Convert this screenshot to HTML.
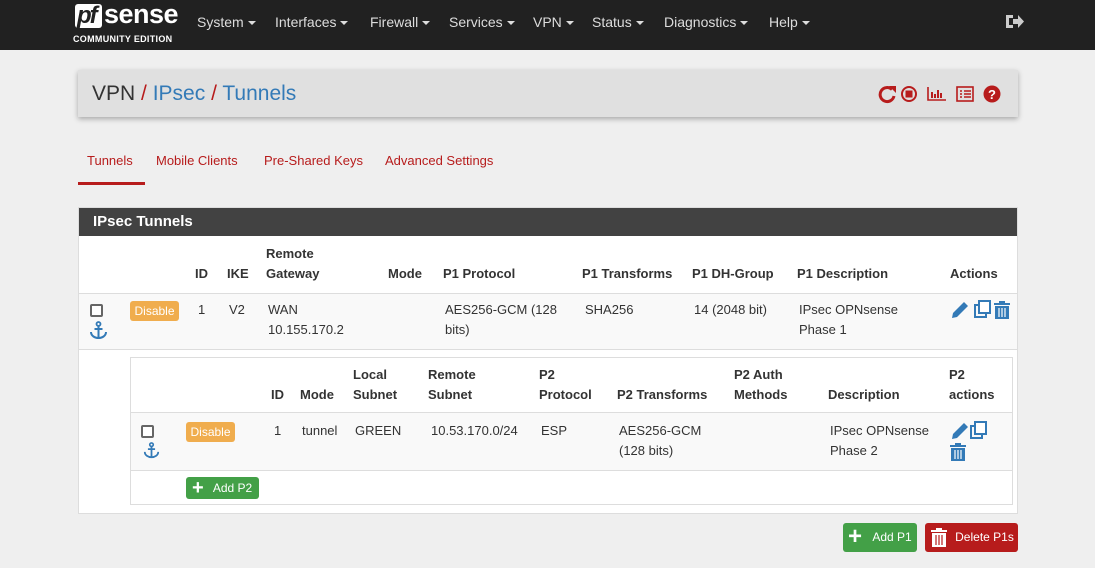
<!DOCTYPE html>
<html><head><meta charset="utf-8"><style>
*{box-sizing:border-box;margin:0;padding:0}
body{width:1095px;height:568px;overflow:hidden;background:#efefef;font-family:"Liberation Sans",sans-serif;font-size:13px;color:#333;position:relative}
.a{position:absolute;white-space:nowrap}
.nav{position:absolute;left:0;top:0;width:1095px;height:50px;background:#212121}
.nav .m{color:#ddd;font-size:14px;top:14px}
.car{display:inline-block;border-left:4px solid transparent;border-right:4px solid transparent;border-top:4px solid #ddd;vertical-align:middle;margin-left:4px}
.bc{position:absolute;left:78px;top:70px;width:940px;height:47px;background:#e0e0e0;box-shadow:0 2px 5px rgba(0,0,0,.3)}
.tab{color:#b71c1c;font-size:13px;top:153px}
.panel{position:absolute;left:78px;top:207px;width:940px;height:307px;background:#fff;border:1px solid #ddd}
.ph{position:absolute;left:0;top:0;width:938px;height:28px;background:#424242;color:#fff;font-weight:bold;font-size:15px;padding:5px 14px}
.th{font-weight:bold;color:#333}
.btn{position:absolute;background:#f0ad4e;color:#fff;border-radius:3px;font-size:12px;text-align:center}
.g{background:#43a047}.r{background:#b71c1c}
.cb{position:absolute;width:13px;height:13px;border:2px solid #666;border-radius:2px;background:#fff}
.blue{color:#337ab7}
</style></head><body>
<div class="nav">
 <div class="a" style="left:75px;top:4px;width:103px;height:25px">
  <div class="a" style="left:0;top:0;width:27px;height:24px;background:#fff;border-radius:3px"></div>
  <div class="a" style="left:2px;top:-2px;color:#212121;font-weight:bold;font-style:italic;font-size:24px;letter-spacing:-2px">pf</div>
  <div class="a" style="left:29px;top:-5px;color:#fff;font-weight:bold;font-size:27px;letter-spacing:-0.5px">sense</div>
 </div>
 <div class="a" style="left:73px;top:34px;color:#fff;font-weight:bold;font-size:9px;letter-spacing:0.3px">COMMUNITY EDITION</div>
 <div class="a m" style="left:197px">System<span class="car"></span></div>
 <div class="a m" style="left:275px">Interfaces<span class="car"></span></div>
 <div class="a m" style="left:370px">Firewall<span class="car"></span></div>
 <div class="a m" style="left:449px">Services<span class="car"></span></div>
 <div class="a m" style="left:533px">VPN<span class="car"></span></div>
 <div class="a m" style="left:592px">Status<span class="car"></span></div>
 <div class="a m" style="left:664px">Diagnostics<span class="car"></span></div>
 <div class="a m" style="left:769px">Help<span class="car"></span></div>
 <svg class="a" style="left:1005px;top:13px" width="20" height="17" viewBox="0 0 20 17"><path d="M1 2h7v3H4v7h4v3H1z" fill="#ccc"/><path d="M8 6h5V2l6 6.5-6 6.5v-4H8z" fill="#ccc"/></svg>
</div>
<div class="bc">
 <div class="a" style="left:14px;top:12px;font-size:21px;color:#333">VPN<span style="color:#b71c1c"> / </span> <span class="blue">IPsec</span><span style="color:#b71c1c"> / </span> <span class="blue">Tunnels</span></div>
 <svg class="a" style="left:800px;top:13px" width="128" height="22" viewBox="0 0 128 22">
  <path d="M14 6.5A7 7 0 1 0 16 13" fill="none" stroke="#b71c1c" stroke-width="3"/><path d="M11 3h7v7z" fill="#b71c1c"/>
  <circle cx="31" cy="11" r="7" fill="none" stroke="#b71c1c" stroke-width="2"/><rect x="27.5" y="7.5" width="7" height="7" fill="#b71c1c"/>
  <path d="M50 4v13h18" fill="none" stroke="#b71c1c" stroke-width="1.6"/><path d="M54 9v6M57 11v4M60 7v8M63 10v5" stroke="#b71c1c" stroke-width="2"/>
  <rect x="79" y="4" width="16" height="14" fill="none" stroke="#b71c1c" stroke-width="1.6"/><path d="M82 8h2M86 8h7M82 11h2M86 11h7M82 14h2M86 14h7" stroke="#b71c1c" stroke-width="1.6"/>
  <circle cx="114" cy="11" r="8.5" fill="#b71c1c"/><text x="114" y="16" font-size="13" font-weight="bold" fill="#fff" text-anchor="middle" font-family="Liberation Sans">?</text>
 </svg>
</div>
<div class="a tab" style="left:87px">Tunnels</div>
<div class="a" style="left:78px;top:182px;width:67px;height:3px;background:#b71c1c"></div>
<div class="a tab" style="left:156px">Mobile Clients</div>
<div class="a tab" style="left:264px">Pre-Shared Keys</div>
<div class="a tab" style="left:385px">Advanced Settings</div>

<div class="panel">
 <div class="ph">IPsec Tunnels</div>
</div>
<div class="a" style="left:79px;top:293px;width:938px;height:1px;background:#ddd"></div>
<div class="a" style="left:79px;top:294px;width:938px;height:55px;background:#f9f9f9"></div>
<div class="a" style="left:79px;top:349px;width:938px;height:1px;background:#ddd"></div>
<div class="a th" style="left:195px;top:266px">ID</div>
<div class="a th" style="left:227px;top:266px">IKE</div>
<div class="a th" style="left:266px;top:244px;line-height:20px">Remote<br>Gateway</div>
<div class="a th" style="left:388px;top:266px">Mode</div>
<div class="a th" style="left:443px;top:266px">P1 Protocol</div>
<div class="a th" style="left:582px;top:266px">P1 Transforms</div>
<div class="a th" style="left:692px;top:266px">P1 DH-Group</div>
<div class="a th" style="left:797px;top:266px">P1 Description</div>
<div class="a th" style="left:950px;top:266px">Actions</div>

<div class="cb" style="left:90px;top:304px"></div>
<svg class="a" style="left:89px;top:321px" width="19" height="19" viewBox="0 0 19 19"><circle cx="9.5" cy="3" r="2" fill="none" stroke="#337ab7" stroke-width="1.8"/><path d="M9.5 5v12M5.5 8h8M2 11c0 4 4 6 7.5 6s7.5-2 7.5-6" fill="none" stroke="#337ab7" stroke-width="2"/></svg>
<div class="btn" style="left:130px;top:301px;width:49px;height:20px;line-height:20px">Disable</div>
<div class="a" style="left:198px;top:302px">1</div>
<div class="a" style="left:229px;top:302px">V2</div>
<div class="a" style="left:268px;top:300px;line-height:20px">WAN<br>10.155.170.2</div>
<div class="a" style="left:445px;top:300px;line-height:20px">AES256-GCM (128<br>bits)</div>
<div class="a" style="left:585px;top:302px">SHA256</div>
<div class="a" style="left:694px;top:302px">14 (2048 bit)</div>
<div class="a" style="left:799px;top:300px;line-height:20px">IPsec OPNsense<br>Phase 1</div>
<svg class="a" style="left:950px;top:300px" width="62" height="20" viewBox="0 0 62 20">
 <path d="M2 18l1-5L14 2l4 4L7 17z" fill="#337ab7"/>
 <rect x="25" y="5" width="11" height="12" fill="none" stroke="#337ab7" stroke-width="2"/><rect x="29" y="1" width="11" height="12" fill="#fff" stroke="#337ab7" stroke-width="2"/>
 <path d="M44 3h16v2H44zM49 1h6v2h-6zM45 6h14v13H45z" fill="#337ab7"/><path d="M49 8v9M52 8v9M55 8v9" stroke="#fff" stroke-width="1.2"/>
</svg>

<div class="a" style="left:130px;top:357px;width:883px;height:148px;background:#fff;border:1px solid #ddd"></div>
<div class="a" style="left:131px;top:412px;width:881px;height:1px;background:#ddd"></div>
<div class="a" style="left:131px;top:413px;width:881px;height:57px;background:#f9f9f9"></div>
<div class="a" style="left:131px;top:470px;width:881px;height:1px;background:#ddd"></div>
<div class="a th" style="left:271px;top:387px">ID</div>
<div class="a th" style="left:300px;top:387px">Mode</div>
<div class="a th" style="left:353px;top:365px;line-height:20px">Local<br>Subnet</div>
<div class="a th" style="left:428px;top:365px;line-height:20px">Remote<br>Subnet</div>
<div class="a th" style="left:539px;top:365px;line-height:20px">P2<br>Protocol</div>
<div class="a th" style="left:617px;top:387px">P2 Transforms</div>
<div class="a th" style="left:734px;top:365px;line-height:20px">P2 Auth<br>Methods</div>
<div class="a th" style="left:828px;top:387px">Description</div>
<div class="a th" style="left:949px;top:365px;line-height:20px">P2<br>actions</div>

<div class="cb" style="left:141px;top:425px"></div>
<svg class="a" style="left:143px;top:442px" width="17" height="17" viewBox="0 0 19 19"><circle cx="9.5" cy="3" r="2" fill="none" stroke="#337ab7" stroke-width="1.8"/><path d="M9.5 5v12M5.5 8h8M2 11c0 4 4 6 7.5 6s7.5-2 7.5-6" fill="none" stroke="#337ab7" stroke-width="2"/></svg>
<div class="btn" style="left:186px;top:422px;width:49px;height:20px;line-height:20px">Disable</div>
<div class="a" style="left:274px;top:423px">1</div>
<div class="a" style="left:302px;top:423px">tunnel</div>
<div class="a" style="left:355px;top:423px">GREEN</div>
<div class="a" style="left:431px;top:423px">10.53.170.0/24</div>
<div class="a" style="left:541px;top:423px">ESP</div>
<div class="a" style="left:619px;top:421px;line-height:20px">AES256-GCM<br>(128 bits)</div>
<div class="a" style="left:830px;top:421px;line-height:20px">IPsec OPNsense<br>Phase 2</div>
<svg class="a" style="left:950px;top:421px" width="44" height="42" viewBox="0 0 44 42">
 <path d="M2 18l1-5L14 2l4 4L7 17z" fill="#337ab7"/>
 <rect x="21" y="5" width="11" height="12" fill="none" stroke="#337ab7" stroke-width="2"/><rect x="25" y="1" width="11" height="12" fill="#fff" stroke="#337ab7" stroke-width="2"/>
 <path d="M0 24h16v2H0zM5 22h6v2H5zM1 27h14v13H1z" fill="#337ab7"/><path d="M5 29v9M8 29v9M11 29v9" stroke="#fff" stroke-width="1.2"/>
</svg>
<div class="btn g" style="left:186px;top:477px;width:73px;height:22px;line-height:22px;padding-left:20px">Add P2</div>
<div class="a" style="left:192px;top:480px;color:#fff;font-size:20px;font-weight:bold;line-height:16px">+</div>

<div class="btn g" style="left:843px;top:523px;width:74px;height:29px;line-height:29px;padding-left:24px">Add P1</div>
<div class="a" style="left:848px;top:527px;color:#fff;font-size:24px;font-weight:bold;line-height:20px">+</div>
<div class="btn r" style="left:925px;top:523px;width:93px;height:29px;line-height:29px;padding-left:26px">Delete P1s</div>
<svg class="a" style="left:931px;top:528px" width="16" height="19" viewBox="0 0 16 19"><path d="M0 2h16v2H0zM5 0h6v2H5zM1 5h14v14H1z" fill="#fff"/><path d="M5 7v10M8 7v10M11 7v10" stroke="#b71c1c" stroke-width="1.2"/></svg>
</body></html>
